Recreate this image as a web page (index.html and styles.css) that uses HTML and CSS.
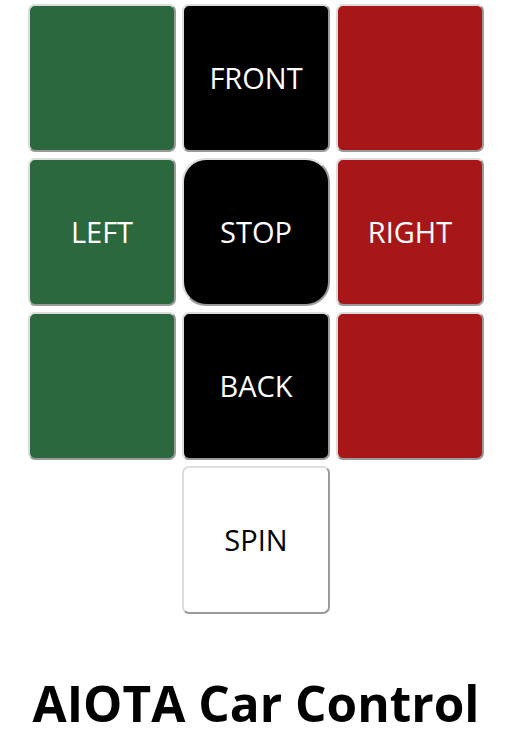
FILE: index.html
```html
<!DOCTYPE html>
<html>
<head>
<meta charset="utf-8">
<link rel="stylesheet" href="styles.css">
</head>
<body>
<div class="page">
  <div class="pad">
    <button class="btn green"></button>
    <button class="btn black">FRONT</button>
    <button class="btn red"></button>
    <button class="btn green">LEFT</button>
    <button class="btn black stop">STOP</button>
    <button class="btn red">RIGHT</button>
    <button class="btn green"></button>
    <button class="btn black">BACK</button>
    <button class="btn red"></button>
    <span class="empty"></span>
    <button class="btn white">SPIN</button>
    <span class="empty"></span>
  </div>
  <h1 class="title">AIOTA Car Control</h1>
</div>
</body>
</html>
```

FILE: styles.css
```css
html, body {
  margin: 0;
  padding: 0;
  background: #ffffff;
}
.page {
  width: 456px;
  margin-left: 28px;
  padding-top: 4px;
  font-family: "Open Sans", "Noto Sans", sans-serif;
}
.pad {
  display: grid;
  grid-template-columns: repeat(3, 148px);
  grid-auto-rows: 148px;
  gap: 6px;
}
.btn {
  box-sizing: border-box;
  width: 148px;
  height: 148px;
  margin: 0;
  padding: 0 0 2px 0;
  border: 2px solid;
  border-color: #dcdcdc #9a9a9a #9a9a9a #dcdcdc;
  border-radius: 7px;
  font-family: "Open Sans", "Noto Sans", sans-serif;
  font-size: 29px;
  font-weight: 400;
  color: #ffffff;
  cursor: pointer;
}
.green { background: #2c683e; }
.red { background: #a81717; }
.black { background: #000000; }
.white { background: #ffffff; color: #000000; }
.stop { border-radius: 24px; }
.title {
  margin: 55px 0 0 0;
  font-size: 49.5px;
  font-weight: 700;
  line-height: normal;
  text-align: center;
  color: #000000;
}
```
